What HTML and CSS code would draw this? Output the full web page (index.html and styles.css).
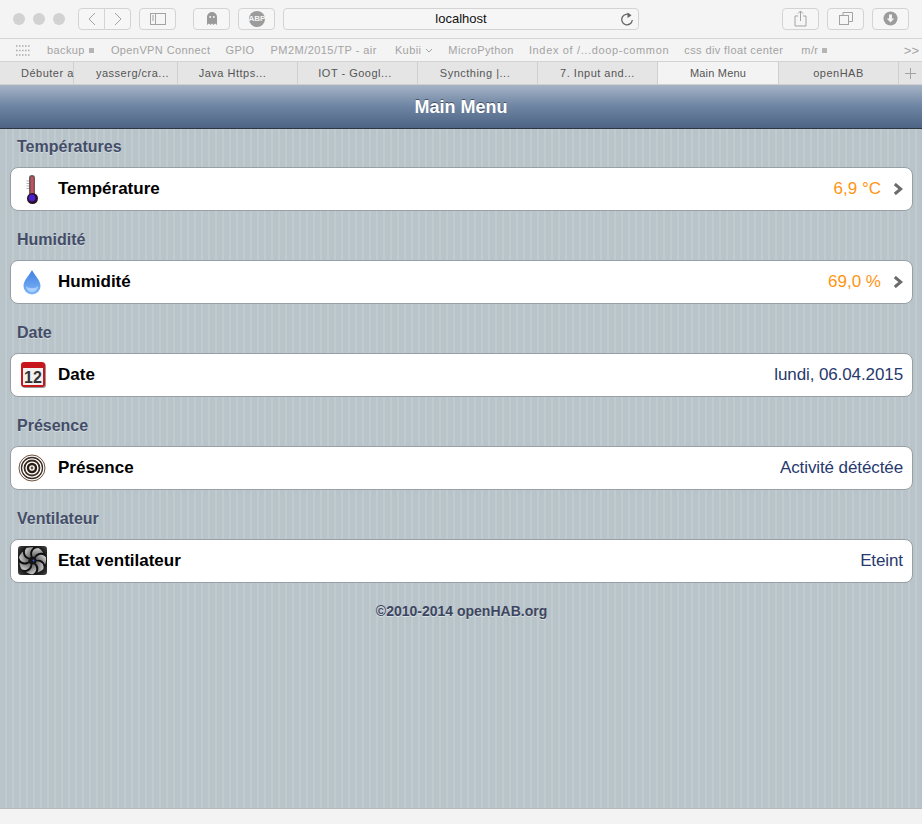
FILE: index.html
```html
<!DOCTYPE html>
<html lang="fr">
<head>
<meta charset="utf-8">
<title>Main Menu</title>
<link rel="stylesheet" href="styles.css">
</head>
<body>
<div class="window">
  <div class="toolbar">
    <div class="lights"><span></span><span></span><span></span></div>
    <div class="nav">
      <button class="tb nav-l"><svg width="10" height="14" viewBox="0 0 10 14"><path d="M8 1 2 7l6 6" class="ln"/></svg></button>
      <button class="tb nav-r"><svg width="10" height="14" viewBox="0 0 10 14"><path d="m2 1 6 6-6 6" class="ln"/></svg></button>
    </div>
    <button class="tb sidebar"><svg width="16" height="12" viewBox="0 0 16 12"><rect x=".5" y=".5" width="15" height="11" class="ln"/><path d="M5.500 1v10M2 3h2M2 5h2M2 7h2" class="ln"/></svg></button>
    <button class="tb ghost"><svg width="12" height="16" viewBox="0 0 12 16"><path d="M1 14V6a5 5 0 0 1 10 0v8l-2-1.500L7.500 14 6 12.500 4.500 14 3 12.500z" fill="#9a9a9a"/><circle cx="4.200" cy="6" r="1" fill="#f4f4f4"/><circle cx="7.800" cy="6" r="1" fill="#f4f4f4"/></svg></button>
    <button class="tb abp"><span class="abp-badge">ABP</span></button>
    <div class="address"><span class="url">localhost</span>
      <svg class="reload" width="14" height="15" viewBox="0 0 14 15"><path d="M10.500 3.500A5.300 5.300 0 1 0 12.300 8" class="ln dark"/><path d="M7.500 0.500 11.500 3.500 7.500 6z" fill="#666"/></svg>
    </div>
    <button class="tb share"><svg width="13" height="17" viewBox="0 0 13 17"><path d="M4 6H1v10h11V6H9M6.500 11V1M4 3.500 6.500 1 9 3.500" class="ln"/></svg></button>
    <button class="tb copies"><svg width="14" height="14" viewBox="0 0 14 14"><rect x=".5" y="3.500" width="9" height="9" class="ln"/><path d="M4 3.500V.5h9.500v9H9.500" class="ln"/></svg></button>
    <button class="tb download"><svg width="15" height="15" viewBox="0 0 15 15"><circle cx="7.500" cy="7.500" r="7" fill="#9c9c9c"/><path d="M6 3.500h3v4h2.300l-3.800 4-3.800-4H6z" fill="#f4f4f4"/></svg></button>
  </div>

  <div class="bookmarks">
    <svg class="grid-ico" width="15" height="11" viewBox="0 0 15 11"><path d="M0 1h15M0 5.500h15M0 10h15" stroke="#aaa" stroke-width="1.500" stroke-dasharray="1.500 1.500"/></svg>
    <span class="bm b1">backup <i class="sq"></i></span>
    <span class="bm">OpenVPN Connect</span>
    <span class="bm b3">GPIO</span>
    <span class="bm b4">PM2M/2015/TP - air</span>
    <span class="bm">Kubii <svg width="8" height="5" viewBox="0 0 8 5"><path d="m1 1 3 3 3-3" class="ln"/></svg></span>
    <span class="bm">MicroPython</span>
    <span class="bm b7">Index of /...doop-common</span>
    <span class="bm">css div float center</span>
    <span class="bm b9">m/r <i class="sq"></i></span>
    <span class="more">&gt;&gt;</span>
  </div>

  <div class="tabs">
    <div class="tab t-first">Débuter a</div>
    <div class="tab t-a">yasserg/cra...</div>
    <div class="tab t-b shift-more">Java Https...</div>
    <div class="tab t-b shift">IOT - Googl...</div>
    <div class="tab t-b shift">Syncthing |...</div>
    <div class="tab t-b">7. Input and...</div>
    <div class="tab t-c active">Main Menu</div>
    <div class="tab t-b">openHAB</div>
    <div class="tab-plus"><svg width="11" height="11" viewBox="0 0 11 11"><path d="M5.500 0v11M0 5.500h11" class="ln"/></svg></div>
  </div>

  <header class="page-title">Main Menu</header>

  <main class="content">
    <h2 class="group">Températures</h2>
    <div class="card">
      <svg class="icon" width="32" height="32" viewBox="0 0 32 32">
        <path d="M10.500 8h2.500M10.500 10.500h2.500M10.500 13h2.500M10.500 15.500h2.500" stroke="#aaa" stroke-width=".9"/>
        <rect x="13" y="2" width="6" height="22" rx="3" fill="#6e5a5a"/>
        <rect x="15" y="4" width="2.400" height="18" fill="#d24a5c"/>
        <circle cx="16.500" cy="25.500" r="5.500" fill="#2a1220"/>
        <circle cx="16" cy="25" r="3.400" fill="#4a1fd0"/>
      </svg>
      <span class="label">Température</span>
      <span class="value warm">6,9 °C</span>
      <svg class="chev" width="10" height="12" viewBox="0 0 10 12"><path d="m1.800 1 6 5-6 5" class="chev-l"/></svg>
    </div>

    <h2 class="group">Humidité</h2>
    <div class="card">
      <svg class="icon" width="32" height="32" viewBox="0 0 32 32">
        <defs><linearGradient id="dr" x1="0" y1="0" x2="0" y2="1"><stop offset="0" stop-color="#3f7fe0"/><stop offset="1" stop-color="#7fb6fa"/></linearGradient></defs>
        <path d="M16 4c1.500 4 8.500 10 8.500 16a8.500 8.500 0 0 1-17 0c0-6 7-12 8.500-16z" fill="url(#dr)"/>
        <path d="M10 20a6 6 0 0 0 12 0c-2 3-10 3-12 0z" fill="#a9d0ff"/>
      </svg>
      <span class="label">Humidité</span>
      <span class="value warm">69,0 %</span>
      <svg class="chev" width="10" height="12" viewBox="0 0 10 12"><path d="m1.800 1 6 5-6 5" class="chev-l"/></svg>
    </div>

    <h2 class="group">Date</h2>
    <div class="card">
      <svg class="icon" width="32" height="32" viewBox="0 0 32 32">
        <rect x="6" y="4" width="24" height="25" rx="3" fill="#999"/>
        <rect x="5" y="3" width="24" height="25" rx="3" fill="#c8161d"/>
        <rect x="7" y="9" width="20" height="17" fill="#f2f2f2"/>
        <text x="17" y="23.500" class="cal">12</text>
      </svg>
      <span class="label">Date</span>
      <span class="value tight">lundi, 06.04.2015</span>
    </div>

    <h2 class="group">Présence</h2>
    <div class="card">
      <svg class="icon" width="32" height="32" viewBox="0 0 32 32">
        <circle cx="16" cy="16" r="13" fill="#fff" stroke="#6a5040" stroke-width="1"/>
        <circle cx="16" cy="16" r="10.500" fill="none" stroke="#3a2a20" stroke-width="1.300"/>
        <circle cx="16" cy="16" r="7.500" fill="none" stroke="#3a2a20" stroke-width="1.800"/>
        <circle cx="16" cy="16" r="4" fill="none" stroke="#2a1c14" stroke-width="2.400"/>
        <circle cx="16" cy="16" r="1.400" fill="#6a5040"/>
      </svg>
      <span class="label">Présence</span>
      <span class="value tight">Activité détéctée</span>
    </div>

    <h2 class="group">Ventilateur</h2>
    <div class="card">
      <svg class="icon" width="32" height="32" viewBox="0 0 32 32">
        <defs>
          <radialGradient id="bg" cx=".5" cy=".5" r=".7"><stop offset=".6" stop-color="#0d0d0d"/><stop offset="1" stop-color="#4a4a4a"/></radialGradient>
          <linearGradient id="bd" x1="0" y1="0" x2="1" y2="1"><stop offset="0" stop-color="#e0e0e0"/><stop offset="1" stop-color="#3a3a3a"/></linearGradient>
        </defs>
        <rect x="2" y="1" width="29" height="29" rx="3" fill="url(#bg)"/>
        <g transform="translate(16.500 15.500)" fill="url(#bd)">
          <path d="M-2-2C-8-4-9-9-6-12.500-3-13.500 0-13.500 1-13-3-10-3-6-1-3z"/>
          <path transform="rotate(51)" d="M-2-2C-8-4-9-9-6-12.500-3-13.500 0-13.500 1-13-3-10-3-6-1-3z"/>
          <path transform="rotate(103)" d="M-2-2C-8-4-9-9-6-12.500-3-13.500 0-13.500 1-13-3-10-3-6-1-3z"/>
          <path transform="rotate(154)" d="M-2-2C-8-4-9-9-6-12.500-3-13.500 0-13.500 1-13-3-10-3-6-1-3z"/>
          <path transform="rotate(206)" d="M-2-2C-8-4-9-9-6-12.500-3-13.500 0-13.500 1-13-3-10-3-6-1-3z"/>
          <path transform="rotate(257)" d="M-2-2C-8-4-9-9-6-12.500-3-13.500 0-13.500 1-13-3-10-3-6-1-3z"/>
          <path transform="rotate(309)" d="M-2-2C-8-4-9-9-6-12.500-3-13.500 0-13.500 1-13-3-10-3-6-1-3z"/>
        </g>
        <circle cx="16.500" cy="15.500" r="4" fill="#151515"/>
        <circle cx="17.500" cy="15.500" r="1" fill="#2a5fd0"/>
      </svg>
      <span class="label">Etat ventilateur</span>
      <span class="value tight">Eteint</span>
    </div>

    <p class="copyright">©2010-2014 openHAB.org</p>
  </main>

  <div class="statusbar"></div>
</div>
</body>
</html>
```
FILE: styles.css
```css
* { box-sizing: border-box; }
html, body { margin: 0; padding: 0; }
body { font-family: "Liberation Sans", Arial, sans-serif; background: #f3f3f3; }
.window { display: flex; flex-direction: column; height: 824px; overflow: hidden; }

.ln { fill: none; stroke: #a3a3a3; stroke-width: 1; }
.ln.dark { stroke: #666; stroke-width: 1.300; }

.toolbar { flex: none; height: 39px; display: flex; align-items: center; padding: 0 13px 1px; background: #f4f4f4; border-bottom: 1px solid #d5d5d5; }
.lights { display: flex; gap: 8px; margin-right: 13px; }
.lights span { width: 12px; height: 12px; border-radius: 50%; background: #d2d2d2; }
.tb { height: 22px; width: 37px; padding: 0; display: flex; align-items: center; justify-content: center; background: #f6f6f6; border: 1px solid #d3d3d3; border-radius: 4px; }
.nav { display: flex; margin-right: 8px; }
.nav .tb { width: 27px; }
.nav-l { border-radius: 4px 0 0 4px; }
.nav-r { border-radius: 0 4px 4px 0; margin-left: -1px; }
.sidebar { margin-right: 17px; }
.ghost { margin-right: 8px; }
.abp { margin-right: 8px; }
.abp-badge { width: 16px; height: 16px; border-radius: 50%; background: #9c9c9c; color: #f4f4f4; font: bold 8px/16px "Liberation Sans", sans-serif; text-align: center; }
.address { width: 356px; height: 22px; margin-right: 143px; position: relative; display: flex; align-items: center; justify-content: center; background: #f6f6f6; border: 1px solid #d3d3d3; border-radius: 4px; }
.url { font-size: 13px; color: #111; }
.reload { position: absolute; right: 4px; top: 3px; }
.share, .copies { margin-right: 8px; }

.bookmarks { flex: none; height: 23px; display: flex; align-items: center; padding-left: 16px; background: #f4f4f4; border-bottom: 1px solid #d3d3d3; font-size: 11px; letter-spacing: .4px; color: #a3a3a3; white-space: nowrap; }
.grid-ico { margin-right: 16px; }
.bm { display: flex; align-items: center; gap: 4px; margin-right: 15px; }
.sq { width: 5px; height: 5px; background: #b5b5b5; display: block; }
.b1 { margin-right: 17px; }
.b3 { margin-right: 16px; }
.b4 { letter-spacing: .45px; margin-right: 18px; }
.b7 { letter-spacing: .65px; }
.b9 { margin-right: 0; margin-left: 3px; }
.more { margin-left: auto; margin-right: 3px; font-size: 13px; letter-spacing: 0; }

.tabs { flex: none; height: 23px; display: flex; background: #e5e5e5; border-bottom: 1px solid #d0d0d0; font-size: 11px; color: #555; }
.tab { display: flex; align-items: center; justify-content: center; border-right: 1px solid #cfcfcf; white-space: nowrap; letter-spacing: .5px; }
.t-first { width: 74px; justify-content: flex-start; padding-left: 21px; }
.t-a { width: 104px; padding-left: 14px; }
.t-b { width: 120px; }
.shift { padding-right: 5px; }
.shift-more { padding-right: 10px; }
.t-c { width: 121px; }
.active { background: #f3f3f3; letter-spacing: .2px; }
.tab-plus { flex: 1; display: flex; align-items: center; justify-content: center; }

.page-title { flex: none; height: 44px; display: flex; align-items: center; justify-content: center; padding-top: 1px; background: linear-gradient(#a6b3c6, #6d84a2 50%, #4f6485); border-bottom: 1px solid #2d3642; color: #fff; font-size: 18px; font-weight: bold; text-shadow: 0 -1px 0 rgba(0, 0, 0, .45); }

.content { flex: 1; padding: 0 9px 0 10px; background-color: #b9c4ca; background-image: repeating-linear-gradient(90deg, #b9c4ca 0 5px, #c0cbd0 5px 7px); overflow: hidden; }
.group { margin: 0; height: 38px; padding: 9px 0 0 7px; font-size: 16px; line-height: 18px; font-weight: bold; color: #434d68; text-shadow: 0 1px 0 rgba(255, 255, 255, .35); }
.card { height: 44px; margin-bottom: 11px; display: flex; align-items: center; padding: 0 9px 0 5px; background: #fff; border: 1px solid #98a0a6; border-radius: 8px; }
.icon { flex: none; margin-right: 10px; }
.label { flex: 1; font-size: 17px; font-weight: bold; color: #000; }
.value { font-size: 17px; color: #28396e; }
.tight { letter-spacing: -.1px; }
.warm { color: #ff9412; }
.chev { margin-left: 12px; }
.chev-l { fill: none; stroke: #6b6b6b; stroke-width: 3; }
.cal { font: bold 16px "Liberation Sans", sans-serif; fill: #333; text-anchor: middle; }
.copyright { margin: 19px 0 0; text-align: center; font-size: 14px; line-height: 18px; font-weight: bold; color: #3d4660; text-shadow: 0 1px 0 rgba(255, 255, 255, .45); }

.statusbar { flex: none; height: 16px; background: #f3f3f3; border-top: 1px solid #b9b9b6; }
```
